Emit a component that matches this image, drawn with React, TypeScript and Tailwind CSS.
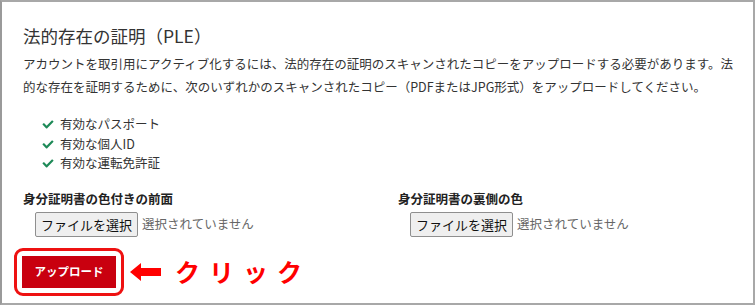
import React from "react";

const font = { fontFamily: '"Noto Sans CJK JP", "Noto Sans", sans-serif' };

function Check() {
  return (
    <svg width="12" height="11" viewBox="0 0 512 512" className="shrink-0">
      <path
        fill="#1e8a58"
        d="M173.9 439.4 7.5 273c-10-10-10-26.2 0-36.2l36.2-36.2c10-10 26.2-10 36.2 0L192 312.7 432.1 72.6c10-10 26.2-10 36.2 0l36.2 36.2c10 10 10 26.2 0 36.2L210.1 439.4c-10 10-26.2 10-36.2 0z"
      />
    </svg>
  );
}

function FileInput() {
  return (
    <div className="flex items-center gap-[4px] pl-[12px] mt-[5px]">
      <button className="h-[25px] px-[5px] bg-[#efefef] border border-[#8f8f8f] rounded-[2px] text-[13px] text-[#111] leading-none">
        ファイルを選択
      </button>
      <span className="text-[12.5px] text-[#666]">選択されていません</span>
    </div>
  );
}

export default function App() {
  return (
    <div className="w-[756px] h-[306px] bg-white" style={font}>
      <div className="w-[755px] h-[305px] border-2 border-[#a8a8a8] border-l-[#9a9a9a] pl-[21px] pt-[22px] text-[#333]">
        <h1 className="text-[17.5px] leading-[24px] text-[#333]">法的存在の証明（PLE）</h1>
        <p className="mt-[4px] text-[12.5px] leading-[23px] w-[725px] text-[#333]">
          アカウントを取引用にアクティブ化するには、法的存在の証明のスキャンされたコピーをアップロードする必要があります。法
          的な存在を証明するために、次のいずれかのスキャンされたコピー（PDFまたはJPG形式）をアップロードしてください。
        </p>
        <ul className="mt-[17px] pl-[19px] flex flex-col">
          {["有効なパスポート", "有効な個人ID", "有効な運転免許証"].map((t) => (
            <li key={t} className="flex items-center gap-[6px] h-[19.5px] text-[12.5px] text-[#333]">
              <Check />
              <span>{t}</span>
            </li>
          ))}
        </ul>
        <div className="mt-[17px] flex">
          <div className="w-[375px]">
            <div className="text-[12.5px] font-bold leading-[16px] text-[#222]">身分証明書の色付きの前面</div>
            <FileInput />
          </div>
          <div>
            <div className="text-[12.5px] font-bold leading-[16px] text-[#222]">身分証明書の裏側の色</div>
            <FileInput />
          </div>
        </div>
        <div className="mt-[11px] flex items-center -ml-[9px]">
          <div className="border-[3px] border-[#ee1111] rounded-[9px] p-[5px]">
            <button className="w-[94px] h-[32px] bg-[#c9000f] text-white text-[11.5px] font-bold">
              アップロード
            </button>
          </div>
          <svg width="32" height="18" viewBox="0 0 32 18" className="ml-[6px]">
            <polygon points="0,9 11,0 11,5 31,5 31,13 11,13 11,18" fill="#f00" />
          </svg>
          <span className="ml-[13px] text-[25px] font-bold text-[#f00] tracking-[9px] leading-none">クリック</span>
        </div>
      </div>
    </div>
  );
}
